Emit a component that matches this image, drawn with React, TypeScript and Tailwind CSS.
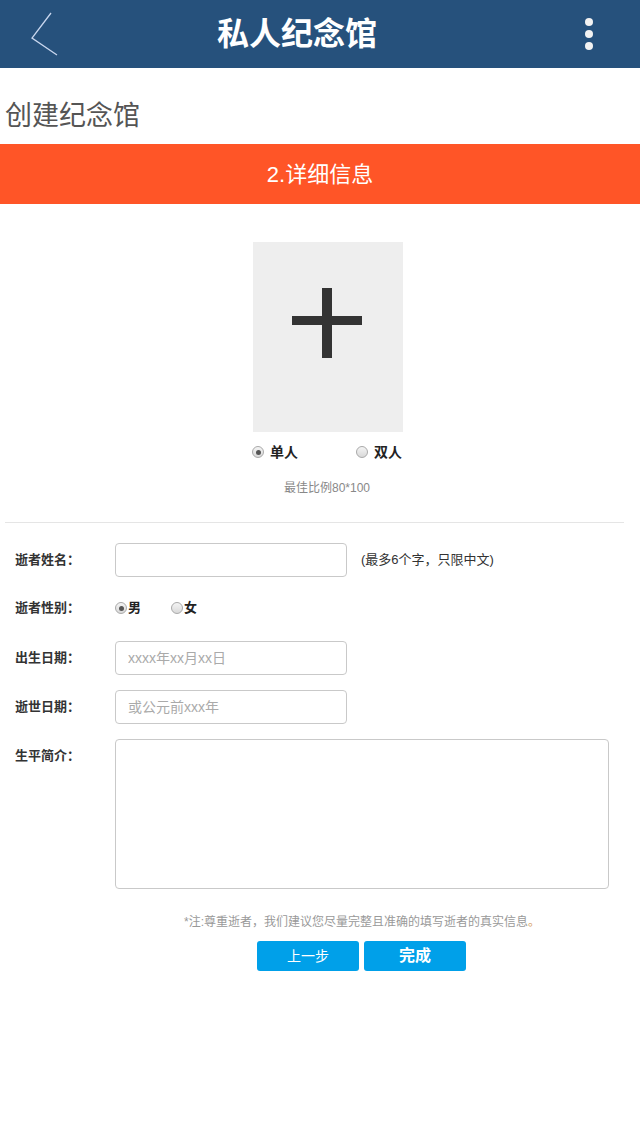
import React from "react";

const FONT = { fontFamily: '"Liberation Sans", "Noto Sans CJK SC", sans-serif' };

function Radio({ checked }: { checked?: boolean }) {
  return (
    <span className="flex h-[12px] w-[12px] shrink-0 items-center justify-center rounded-full border border-[#a9a9a9] bg-gradient-to-b from-[#f4f4f4] to-[#d9d9d9]">
      {checked ? <span className="h-[5px] w-[5px] rounded-full bg-[#555]" /> : null}
    </span>
  );
}

function Field({ placeholder }: { placeholder?: string }) {
  return (
    <input
      type="text"
      placeholder={placeholder}
      className="h-[34px] w-[232px] rounded-[4px] border border-[#c9c9c9] bg-white px-[12px] text-[14px] text-[#333] outline-none placeholder:text-[#aaa]"
    />
  );
}

function Row({ label, children }: { label: string; children: React.ReactNode }) {
  return (
    <div className="flex items-start">
      <div className="flex h-[34px] w-[115px] shrink-0 items-center pl-[15px] text-[13px] font-bold text-[#333]">
        {label}
      </div>
      {children}
    </div>
  );
}

export default function App() {
  return (
    <div className="min-h-[1136px] w-[640px] bg-white" style={FONT}>
      {/* header */}
      <header className="flex h-[68px] items-center bg-[#26517c]">
        <svg width="28" height="46" viewBox="0 0 28 46" className="ml-[30px]">
          <path d="M21 2 L2 27 L27 44" fill="none" stroke="#c8d6ee" strokeWidth="1.3" />
        </svg>
        <h1 className="ml-[159px] text-[32px] font-bold leading-none text-white">私人纪念馆</h1>
        <div className="ml-auto mr-[47px] flex flex-col gap-[4px]">
          <span className="h-[8px] w-[8px] rounded-full bg-[#f2f2f2]" />
          <span className="h-[8px] w-[8px] rounded-full bg-[#f2f2f2]" />
          <span className="h-[8px] w-[8px] rounded-full bg-[#f2f2f2]" />
        </div>
      </header>

      <div className="h-[76px] pl-[5px] pt-[31px] text-[27px] leading-[34px] text-[#555]">创建纪念馆</div>

      <div className="flex h-[60px] items-center justify-center bg-[#ff5527] text-[22px] text-white">
        2.详细信息
      </div>

      {/* photo */}
      <div className="ml-[253px] mt-[38px] h-[190px] w-[150px] bg-[#eeeeee]">
        <svg width="150" height="190" viewBox="0 0 150 190">
          <rect x="39" y="74" width="70" height="9" fill="#333" />
          <rect x="69" y="46" width="10" height="70" fill="#333" />
        </svg>
      </div>

      <div className="ml-[252px] mt-[10px] flex h-[20px] items-center text-[14px] font-bold text-[#222]">
        <Radio checked />
        <span className="ml-[6px]">单人</span>
        <span className="ml-[58px]">
          <Radio />
        </span>
        <span className="ml-[6px]">双人</span>
      </div>

      <div className="mt-[17px] text-center text-[12px] leading-[18px] text-[#888] pl-[14px]">最佳比例80*100</div>

      <div className="mx-[5px] mt-[25px] w-[619px] border-t border-[#e5e5e5]" />

      {/* form */}
      <div className="mt-[20px] flex flex-col gap-[15px]">
        <Row label="逝者姓名：">
          <Field />
          <span className="ml-[14px] flex h-[34px] items-center text-[13px] text-[#333]">(最多6个字，只限中文)</span>
        </Row>
        <div className="-mt-[1px]">
          <Row label="逝者性别：">
            <div className="flex h-[34px] items-center text-[13px] font-bold text-[#222]">
              <Radio checked />
              <span className="ml-[1px]">男</span>
              <span className="ml-[30px]">
                <Radio />
              </span>
              <span className="ml-[1px]">女</span>
            </div>
          </Row>
        </div>
        <div className="mt-[1px]">
          <Row label="出生日期：">
            <Field placeholder="xxxx年xx月xx日" />
          </Row>
        </div>
        <Row label="逝世日期：">
          <Field placeholder="或公元前xxx年" />
        </Row>
        <Row label="生平简介：">
          <textarea className="h-[150px] w-[494px] resize-none rounded-[4px] border border-[#c9c9c9] bg-white outline-none" />
        </Row>
      </div>

      <p className="ml-[184px] mt-[24px] text-[12px] leading-[18px] text-[#999]">
        *注:尊重逝者，我们建议您尽量完整且准确的填写逝者的真实信息<span className="text-[#d9a36a]">。</span>
      </p>

      <div className="ml-[257px] mt-[10px] flex gap-[5px]">
        <button className="h-[30px] w-[102px] rounded-[3px] bg-[#00a0e9] text-[14px] text-white">上一步</button>
        <button className="h-[30px] w-[102px] rounded-[3px] bg-[#00a0e9] text-[16px] font-bold text-white">完成</button>
      </div>
    </div>
  );
}
